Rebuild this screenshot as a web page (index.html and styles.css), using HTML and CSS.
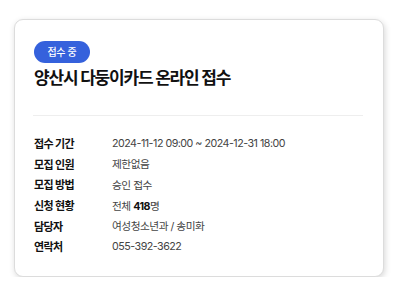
FILE: index.html
```html
<!DOCTYPE html>
<html>
  <head>
    <meta name="viewport" content="width=device-width, initial-scale=1" />
    <link rel="stylesheet" href="styles.css">
  </head>
  <body>
    <div class="card">
      <span class="badge">접수 중</span>
      <h1 class="title">양산시 다둥이카드 온라인 접수</h1>
      <hr class="divider" />
      <dl class="info">
        <dt>접수 기간</dt>
        <dd>2024-11-12 09:00 ~ 2024-12-31 18:00</dd>
        <dt>모집 인원</dt>
        <dd>제한없음</dd>
        <dt>모집 방법</dt>
        <dd>승인 접수</dd>
        <dt>신청 현황</dt>
        <dd>전체 <b>418</b>명</dd>
        <dt>담당자</dt>
        <dd>여성청소년과 / 송미화</dd>
        <dt>연락처</dt>
        <dd>055-392-3622</dd>
      </dl>
    </div>
  </body>
</html>
```
FILE: styles.css
```css
* {
  box-sizing: border-box;
}
body {
  margin: 0;
  padding: 19px 16px 0 14px;
  background: #fff;
  font-family: Inter, "Noto Sans CJK KR", sans-serif;
  color: #111;
}

/* Card */
.card {
  width: 370px;
  height: 258px;
  padding: 20px 20px 0 19px;
  background: #fff;
  border: 1px solid #dcdcdc;
  border-radius: 9px;
  box-shadow: 1px 2px 6px rgba(0, 0, 0, 0.16);
}

.badge {
  display: inline-block;
  width: 56px;
  height: 22px;
  line-height: 22px;
  border-radius: 11px;
  background: #3561dc;
  color: #fff;
  font-size: 10px;
  font-weight: 500;
  text-align: center;
  letter-spacing: -0.3px;
}

.title {
  margin: 3px 0 0;
  font-size: 17px;
  line-height: 24px;
  font-weight: 700;
  letter-spacing: -1.2px;
}

.divider {
  margin: 25px 0 0 -1px;
  border: 0;
  border-top: 1px solid #eee;
}

/* Info rows */
.info {
  display: grid;
  grid-template-columns: 78px 1fr;
  grid-auto-rows: 20.6px;
  align-items: center;
  margin: 17px 0 0;
  font-size: 11px;
}
.info dt {
  font-weight: 700;
  letter-spacing: -0.6px;
  color: #111;
}
.info dd {
  margin: 0;
  color: #444;
  font-size: 10.7px;
  letter-spacing: -0.5px;
}
.info dd b {
  color: #111;
}
```
